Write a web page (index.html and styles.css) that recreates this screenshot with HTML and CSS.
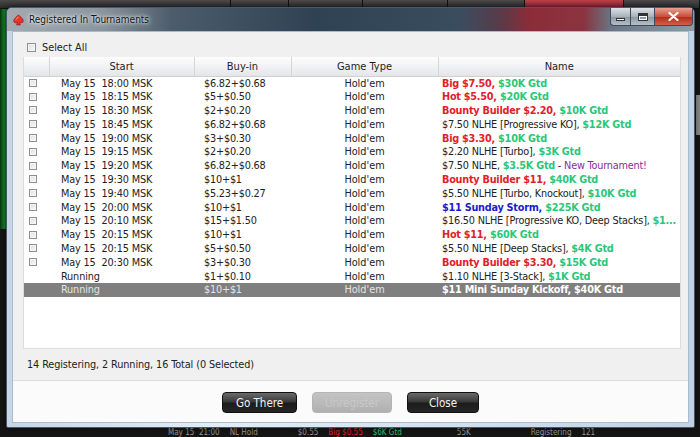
FILE: index.html
```html
<!DOCTYPE html>
<html lang="en">
<head>
    <meta charset="UTF-8">
    <title>Registered In Tournaments</title>
    <link rel="stylesheet" href="styles.css">
</head>
<body>
    <!-- poker client behind the dialog -->
    <div class="backdrop">
        <div class="app-tabs">
            <div class="app-tab" style="width:230px"></div>
            <div class="app-tab" style="width:57px"></div>
            <div class="app-tab" style="width:73px"></div>
            <div class="app-tab" style="width:84px"></div>
            <div class="app-tab" style="width:76px"></div>
            <div class="app-tab active" style="width:98px"></div>
            <div class="app-tab" style="flex:1"></div>
        </div>
        <div class="app-side"></div>
        <div class="app-scroll"></div>
        <div class="app-row">
            <span>May 15  21:00</span>
            <span>NL Hold</span>
            <span class="app-buyin">$0.55</span>
            <span class="red">Big $0.55</span>
            <span class="green">$6K Gtd</span>
            <span class="app-prize">55K</span>
            <span class="app-state">Registering</span>
            <span>121</span>
        </div>
    </div>

    <div class="window">
        <div class="titlebar">
            <svg class="app-icon" width="11" height="12" viewBox="0 0 11 12">
                <path d="M5.5 0.8 C7.2 3 10.3 4.4 10.3 6.9 C10.3 8.5 8.6 9.4 6.6 8.4 L7.4 11 H3.6 L4.4 8.4 C2.4 9.4 0.7 8.5 0.7 6.9 C0.7 4.4 3.8 3 5.5 0.8 Z" fill="#e8342a" stroke="#8a1410" stroke-width="0.6"/>
                <path d="M3 5.6 C3.6 4.6 4.6 3.8 5.5 2.8" stroke="#ffb0a0" stroke-width="0.9" fill="none"/>
            </svg>
            <span class="title">Registered In Tournaments</span>
            <div class="controls">
                <div class="ctl ctl-min"><span class="min-bar"></span></div>
                <div class="ctl ctl-max"><span class="max-box"></span></div>
                <div class="ctl ctl-close">
                    <svg width="11" height="9" viewBox="0 0 11 9">
                        <path d="M1.5 1 L9.5 8 M9.5 1 L1.5 8" stroke="#fff" stroke-width="2.2" stroke-linecap="round"/>
                    </svg>
                </div>
            </div>
        </div>

        <div class="client">
            <div class="content">
                <label class="select-all"><span class="box"></span>Select All</label>

                <div class="list">
                    <table class="grid">
                        <colgroup>
                            <col style="width:25px">
                            <col style="width:145px">
                            <col style="width:97px">
                            <col style="width:147px">
                            <col>
                        </colgroup>
                        <thead>
                            <tr>
                                <th></th>
                                <th>Start</th>
                                <th>Buy-in</th>
                                <th>Game Type</th>
                                <th>Name</th>
                            </tr>
                        </thead>
                        <tbody>
                            <tr><td class="chk"><span class="box sm"></span></td><td class="start">May 15  18:00 MSK</td><td class="buyin">$6.82+$0.68</td><td class="game">Hold'em</td><td class="name"><b class="red">Big $7.50, </b><b class="green">$30K Gtd</b></td></tr>
                            <tr><td class="chk"><span class="box sm"></span></td><td class="start">May 15  18:15 MSK</td><td class="buyin">$5+$0.50</td><td class="game">Hold'em</td><td class="name"><b class="red">Hot $5.50, </b><b class="green">$20K Gtd</b></td></tr>
                            <tr><td class="chk"><span class="box sm"></span></td><td class="start">May 15  18:30 MSK</td><td class="buyin">$2+$0.20</td><td class="game">Hold'em</td><td class="name"><b class="red">Bounty Builder $2.20, </b><b class="green">$10K Gtd</b></td></tr>
                            <tr><td class="chk"><span class="box sm"></span></td><td class="start">May 15  18:45 MSK</td><td class="buyin">$6.82+$0.68</td><td class="game">Hold'em</td><td class="name">$7.50 NLHE [Progressive KO], <b class="green">$12K Gtd</b></td></tr>
                            <tr><td class="chk"><span class="box sm"></span></td><td class="start">May 15  19:00 MSK</td><td class="buyin">$3+$0.30</td><td class="game">Hold'em</td><td class="name"><b class="red">Big $3.30, </b><b class="green">$10K Gtd</b></td></tr>
                            <tr><td class="chk"><span class="box sm"></span></td><td class="start">May 15  19:15 MSK</td><td class="buyin">$2+$0.20</td><td class="game">Hold'em</td><td class="name">$2.20 NLHE [Turbo], <b class="green">$3K Gtd</b></td></tr>
                            <tr><td class="chk"><span class="box sm"></span></td><td class="start">May 15  19:20 MSK</td><td class="buyin">$6.82+$0.68</td><td class="game">Hold'em</td><td class="name">$7.50 NLHE, <b class="green">$3.5K Gtd</b> - <span class="purple">New Tournament!</span></td></tr>
                            <tr><td class="chk"><span class="box sm"></span></td><td class="start">May 15  19:30 MSK</td><td class="buyin">$10+$1</td><td class="game">Hold'em</td><td class="name"><b class="red">Bounty Builder $11, </b><b class="green">$40K Gtd</b></td></tr>
                            <tr><td class="chk"><span class="box sm"></span></td><td class="start">May 15  19:40 MSK</td><td class="buyin">$5.23+$0.27</td><td class="game">Hold'em</td><td class="name">$5.50 NLHE [Turbo, Knockout], <b class="green">$10K Gtd</b></td></tr>
                            <tr><td class="chk"><span class="box sm"></span></td><td class="start">May 15  20:00 MSK</td><td class="buyin">$10+$1</td><td class="game">Hold'em</td><td class="name"><b class="blue">$11 Sunday Storm, </b><b class="green">$225K Gtd</b></td></tr>
                            <tr><td class="chk"><span class="box sm"></span></td><td class="start">May 15  20:10 MSK</td><td class="buyin">$15+$1.50</td><td class="game">Hold'em</td><td class="name">$16.50 NLHE [Progressive KO, Deep Stacks], <b class="green">$1...</b></td></tr>
                            <tr><td class="chk"><span class="box sm"></span></td><td class="start">May 15  20:15 MSK</td><td class="buyin">$10+$1</td><td class="game">Hold'em</td><td class="name"><b class="red">Hot $11, </b><b class="green">$60K Gtd</b></td></tr>
                            <tr><td class="chk"><span class="box sm"></span></td><td class="start">May 15  20:15 MSK</td><td class="buyin">$5+$0.50</td><td class="game">Hold'em</td><td class="name">$5.50 NLHE [Deep Stacks], <b class="green">$4K Gtd</b></td></tr>
                            <tr><td class="chk"><span class="box sm"></span></td><td class="start">May 15  20:30 MSK</td><td class="buyin">$3+$0.30</td><td class="game">Hold'em</td><td class="name"><b class="red">Bounty Builder $3.30, </b><b class="green">$15K Gtd</b></td></tr>
                            <tr><td class="chk"></td><td class="start">Running</td><td class="buyin">$1+$0.10</td><td class="game">Hold'em</td><td class="name">$1.10 NLHE [3-Stack], <b class="green">$1K Gtd</b></td></tr>
                            <tr class="selected"><td class="chk"></td><td class="start">Running</td><td class="buyin">$10+$1</td><td class="game">Hold'em</td><td class="name"><b>$11 Mini Sunday Kickoff, $40K Gtd</b></td></tr>
                        </tbody>
                    </table>
                </div>

                <div class="status">14 Registering, 2 Running, 16 Total (0 Selected)</div>
            </div>

            <div class="footer">
                <button class="btn btn-go">Go There</button>
                <button class="btn btn-unreg" disabled>Unregister</button>
                <button class="btn btn-close">Close</button>
            </div>
        </div>
    </div>
</body>
</html>
```

FILE: styles.css
```css
* {
    margin: 0;
    padding: 0;
    box-sizing: border-box;
}

body {
    width: 700px;
    height: 437px;
    overflow: hidden;
    position: relative;
    background: #151515;
    font-family: "DejaVu Sans Condensed", "Liberation Sans", Arial, sans-serif;
    font-size: 10.8px;
    color: #222;
}

/* ---- app behind the dialog ---- */

.backdrop {
    position: absolute;
    inset: 0;
}

.app-tabs {
    display: flex;
    height: 9px;
    background: #111;
}

.app-tab {
    height: 8px;
    margin-right: 1px;
    background: linear-gradient(#4a4a4a, #2b2b2b);
}

.app-tab.active {
    background: linear-gradient(#c0404a, #8a2030);
}

.app-side {
    position: absolute;
    left: 0;
    top: 9px;
    width: 7px;
    height: 220px;
    background: linear-gradient(to right, #0a3010, #138a2a 60%, #0d5a1c);
}

.app-scroll {
    position: absolute;
    right: 0;
    top: 95px;
    width: 4px;
    height: 40px;
    background: #8a8a8a;
}

.app-row {
    position: absolute;
    left: 168px;
    top: 428px;
    display: flex;
    gap: 10px;
    height: 9px;
    line-height: 9px;
    color: #9a9a9a;
    font-size: 8px;
    white-space: pre;
}

.app-buyin { margin-left: 30px; }
.app-prize { margin-left: 45px; }
.app-state { margin-left: 50px; }

/* ---- dialog window ---- */

.window {
    position: absolute;
    left: 6px;
    top: 7px;
    width: 689px;
    height: 421px;
    display: flex;
    flex-direction: column;
    border: 1px solid #4a5866;
    border-radius: 6px 6px 2px 2px;
    background: linear-gradient(to right, #c7d6e6, #e4edf6 30%, #d0dfee 70%, #c0d2e4);
    box-shadow: 0 0 6px rgba(0,0,0,0.6);
}

.titlebar {
    height: 23px;
    display: flex;
    align-items: center;
    padding-left: 6px;
    border-radius: 5px 5px 0 0;
    background: linear-gradient(to right, #a3abb2 0%, #8a949d 14%, #4c5c6b 24%, #2f4253 45%, #3a4d5e 66%, #5a3a48 72%, #8c2c38 76%, #8a3440 84%, #6a7684 88%, #8e9aa6 100%);
}

.app-icon {
    margin-right: 5px;
}

.title {
    font-size: 10px;
    color: #141414;
    text-shadow: 0 0 6px #fff, 0 0 3px #fff;
}

.controls {
    margin-left: auto;
    margin-right: 1px;
    align-self: flex-start;
    display: flex;
    height: 18px;
}

.ctl {
    height: 18px;
    display: flex;
    align-items: center;
    justify-content: center;
    border: 1px solid #404a56;
    border-top: none;
}

.ctl-min {
    width: 20px;
    border-radius: 0 0 0 4px;
    border-right: none;
    background: linear-gradient(#dde2e7, #a8b2bc 50%, #8a96a2 51%, #b4bec8);
}

.ctl-max {
    width: 24px;
    border-right: none;
    background: linear-gradient(#dde2e7, #a8b2bc 50%, #8a96a2 51%, #b4bec8);
}

.ctl-close {
    width: 39px;
    border-radius: 0 0 4px 0;
    background: linear-gradient(#e8a090, #c8503c 50%, #b02a18 51%, #d06048);
}

.min-bar {
    width: 9px;
    height: 3px;
    margin-top: 6px;
    background: #fff;
    border: 1px solid #333;
}

.max-box {
    width: 10px;
    height: 8px;
    border: 1px solid #333;
    border-top-width: 3px;
    box-shadow: inset 0 0 0 1px #fff;
}

.client {
    flex: 1;
    margin: 0 5px 4px 5px;
    display: flex;
    flex-direction: column;
    border: 1px solid #a8bbd0;
    background: #f0f0f0;
}

.content {
    padding: 7px 7px 7px 10px;
}

.select-all {
    height: 16px;
    display: flex;
    align-items: center;
    padding-left: 4px;
    margin-bottom: 2px;
}

.box {
    width: 9px;
    height: 9px;
    margin-right: 6px;
    border: 1px solid #8e8f8f;
    background: linear-gradient(135deg, #dcdcdc, #fbfbfb);
    box-shadow: inset 0 0 0 1px #f4f4f4;
}

.box.sm {
    display: block;
    width: 8px;
    height: 8px;
    margin: 0;
}

.list {
    height: 292px;
    background: #fff;
    border: 1px solid #dcdcdc;
    border-top: none;
}

.grid {
    width: 100%;
    table-layout: fixed;
    border-collapse: collapse;
}

.grid th {
    height: 19px;
    font-weight: normal;
    font-size: 11px;
    color: #1e1e1e;
    text-align: center;
    border-right: 1px solid #d5d5d5;
    border-bottom: 1px solid #d0d0d0;
    background: linear-gradient(#fdfdfd, #f1f2f4 50%, #e4e5e8);
}

.grid th:last-child {
    border-right: none;
}

.grid td {
    height: 13.8px;
    line-height: 13px;
    padding: 0;
    white-space: pre;
    overflow: hidden;
}

.grid td.chk {
    padding-left: 5px;
}

.grid td.start {
    padding-left: 12px;
    letter-spacing: -0.15px;
}

.grid td.buyin {
    padding-left: 10px;
    letter-spacing: -0.2px;
}

.grid td.game {
    text-align: center;
}

.grid td.name {
    padding-left: 4px;
    letter-spacing: -0.2px;
}

.grid td.name b {
    letter-spacing: -0.25px;
}

.red { color: #e3202a; }
.green { color: #2ac77a; }
.blue { color: #1c1ccc; }
.purple { color: #8b2b9b; }

.selected td {
    background: #7f7f7f;
    color: #e4e4e4;
}

.selected td.name b {
    color: #fff;
}

.status {
    margin-top: 8px;
    height: 16px;
    line-height: 16px;
    padding-left: 4px;
    letter-spacing: -0.1px;
}

.footer {
    flex: 1;
    display: flex;
    justify-content: center;
    align-items: flex-start;
    gap: 15px;
    padding-top: 11px;
    border-top: 1px solid #dedede;
    background: #fbfbfb;
}

.btn {
    height: 21px;
    font-family: inherit;
    font-size: 11.5px;
    color: #f2f2f2;
    border: 1px solid #111;
    border-radius: 4px;
    background: linear-gradient(#6a6a6a, #3a3a3a 45%, #1c1c1c 55%, #262626);
    cursor: pointer;
}

.btn-go { width: 75px; }
.btn-unreg { width: 80px; }
.btn-close { width: 72px; }

.btn:disabled {
    color: #c8c8c8;
    border-color: #b4b4b4;
    background: linear-gradient(#c4c4c4, #b0b0b0);
    cursor: default;
}
```
